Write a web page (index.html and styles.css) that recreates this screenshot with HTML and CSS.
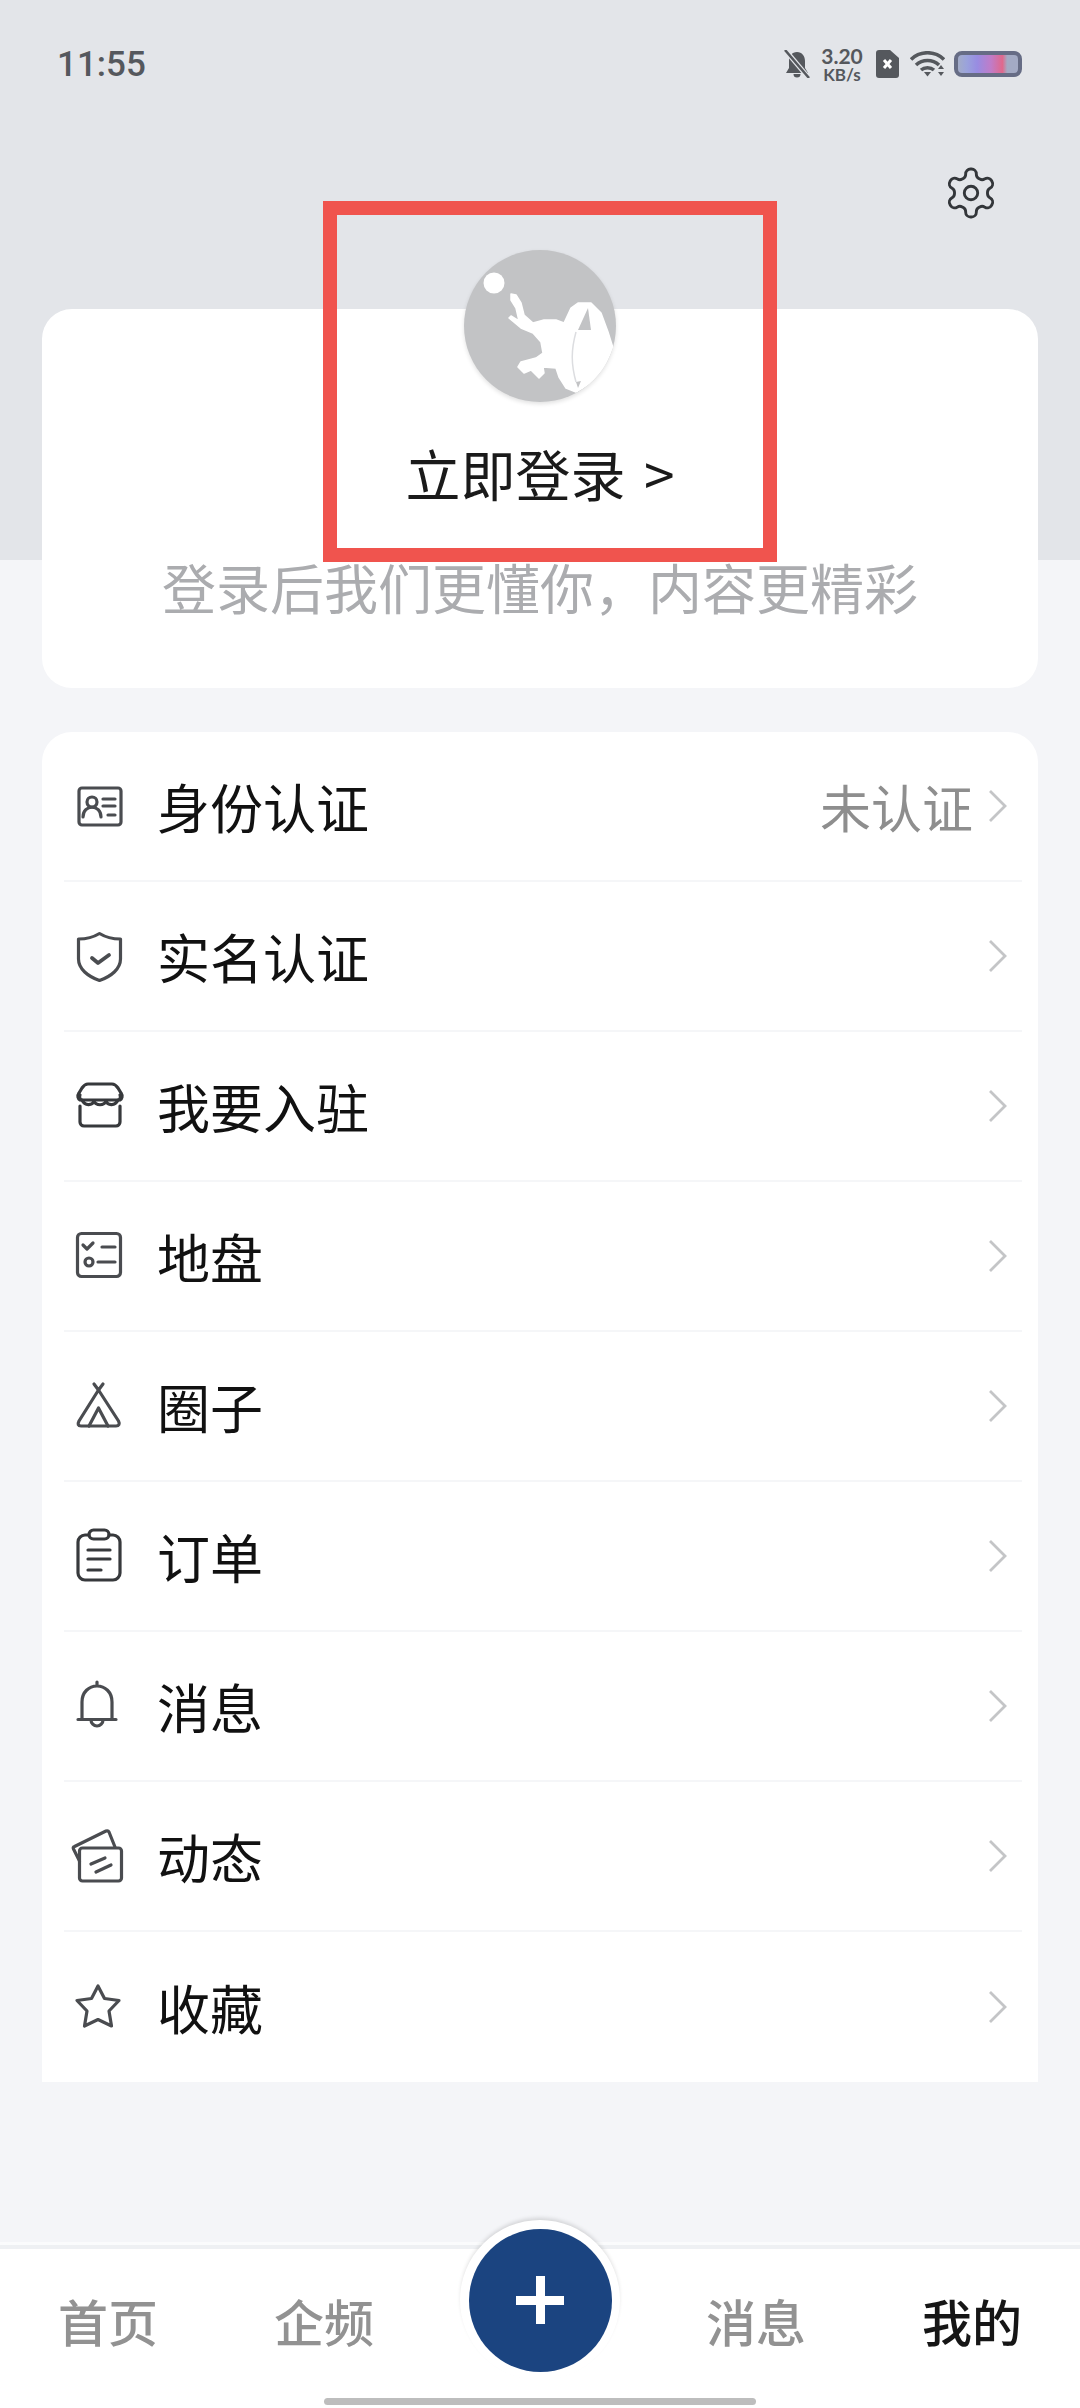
FILE: index.html
```html
<!DOCTYPE html>
<html lang="zh-CN">
<head>
<meta charset="utf-8">
<title>我的</title>
<link rel="stylesheet" href="styles.css">
</head>
<body>
<div class="page">
  <header class="status">
    <span class="time">11:55</span>
    <div class="status-icons">
      <svg class="st-bell" viewBox="0 0 26 28"><path d="M13 2c5 0 8 4 8 9v7l3 5H2l3-5v-7c0-5 3-9 8-9z" fill="#55585d"/><path d="M9.500 24a3.500 3.500 0 0 0 7 0z" fill="#55585d"/><path d="M2 1l22 26" stroke="#e3e5e9" stroke-width="5"/><path d="M1 0l24 28" stroke="#55585d" stroke-width="2.500"/></svg>
      <div class="speed"><span class="speed-num">3.20</span><span class="speed-unit">KB/s</span></div>
      <svg class="st-sim" viewBox="0 0 23 28"><path d="M3 0h11l9 8v17a3 3 0 0 1-3 3H3a3 3 0 0 1-3-3V3a3 3 0 0 1 3-3z" fill="#55585d"/><path d="M8 10l7 8M15 10l-7 8" stroke="#fff" stroke-width="3"/></svg>
      <svg class="st-wifi" viewBox="0 0 35 26"><g fill="none" stroke="#55585d" stroke-width="3.600"><path d="M1 8.500C10-.5 25-.5 34 8.500"/><path d="M6 14c6.500-6 16.500-6 23 0"/><path d="M11 19c3.500-3 9.500-3 13 0"/></g><path d="M14 21h7l-3.500 4.500z" fill="#55585d"/><path d="M31 14l3 4h-6zM31 25l3-4h-6z" fill="#55585d"/></svg>
      <div class="battery"></div>
    </div>
  </header>

  <div class="top-actions">
    <svg class="gear" viewBox="2 2 20 20"><path d="M12.220 2h-.44a2 2 0 0 0-2 2v.18a2 2 0 0 1-1 1.730l-.43.25a2 2 0 0 1-2 0l-.15-.08a2 2 0 0 0-2.730.73l-.22.38a2 2 0 0 0 .73 2.730l.15.1a2 2 0 0 1 1 1.720v.51a2 2 0 0 1-1 1.740l-.15.09a2 2 0 0 0-.73 2.730l.22.38a2 2 0 0 0 2.730.73l.15-.08a2 2 0 0 1 2 0l.43.25a2 2 0 0 1 1 1.730V20a2 2 0 0 0 2 2h.44a2 2 0 0 0 2-2v-.18a2 2 0 0 1 1-1.730l.43-.25a2 2 0 0 1 2 0l.15.08a2 2 0 0 0 2.730-.73l.22-.39a2 2 0 0 0-.73-2.730l-.15-.08a2 2 0 0 1-1-1.740v-.5a2 2 0 0 1 1-1.740l.15-.09a2 2 0 0 0 .73-2.730l-.22-.38a2 2 0 0 0-2.730-.73l-.15.08a2 2 0 0 1-2 0l-.43-.25a2 2 0 0 1-1-1.730V4a2 2 0 0 0-2-2z"/><circle cx="12" cy="12" r="2.800"/></svg>
  </div>

  <section class="profile-card">
    <div class="avatar">
      <svg viewBox="0 0 152 152">
        <circle cx="30" cy="33" r="10.500" fill="#fff"/>
        <path d="M47 44L52 45L57 53L60 65L69 73L80 70L92 70L100 73L107 58L114 53L127 53L137 63L144 82L149 98L140 118L127 133L112 142L102 138L95 127L92 118L79 117L80 123L75 128L67 120L60 123L54 117L57 112L72 108L79 103L77 92L69 83L57 78L45 68L47 66L55 71L52 58L47 50Z" fill="#fff" stroke="#fff" stroke-width="1.500" stroke-linejoin="round"/>
        <path d="M124 58L114 80L127 80Z" fill="#c2c3c5"/>
        <path d="M112 132L117 131L114 138Z" fill="#c2c3c5"/>
        <path d="M112 82c-5 18-5 32 0 50" fill="none" stroke="#dcdde0" stroke-width="1.500"/>
      </svg>
    </div>
    <div class="login">立即登录 &gt;</div>
    <div class="tagline">登录后我们更懂你，内容更精彩</div>
    <div class="annotation"></div>
  </section>

  <section class="menu">
    <div class="row">
      <svg class="ico" viewBox="0 0 48 48"><rect x="3" y="6" width="42" height="37" rx="3"/><circle cx="16" cy="20" r="5"/><path d="M7 35c0-13 18-13 18 0M27 17h12M27 24h12M32 33h7"/></svg>
      <span class="label">身份认证</span>
      <span class="value">未认证</span>
      <svg class="chev" viewBox="0 0 18 32"><path d="M1 1l15 15L1 31"/></svg>
    </div>
    <div class="row">
      <svg class="ico" viewBox="0 0 48 48"><path d="M23.500 1.500C30 5.500 37 7 44.500 7v20c0 10-9.500 17.500-21 21.500C12 44.500 2.500 37 2.500 27V7c7.500 0 14.500-1.500 21-5.500z"/><path class="thick" d="M16 26l6 5 11-8"/></svg>
      <span class="label">实名认证</span>
      <svg class="chev" viewBox="0 0 18 32"><path d="M1 1l15 15L1 31"/></svg>
    </div>
    <div class="row">
      <svg class="ico dark" viewBox="0 0 48 48"><path d="M12 2h24c3 0 4 1 6 4l3 5c2 3 1 6-1 7H4c-2-1-3-4-1-7l3-5c2-3 3-4 6-4z"/><path d="M4 13c-1 2 0 5 2 5 3 6 10 6 12 1 2 5 10 5 12 0 2 5 9 5 12-1 2 0 3-3 2-5"/><path d="M4 24v16a4 4 0 0 0 4 4h32a4 4 0 0 0 4-4V24"/></svg>
      <span class="label">我要入驻</span>
      <svg class="chev" viewBox="0 0 18 32"><path d="M1 1l15 15L1 31"/></svg>
    </div>
    <div class="row">
      <svg class="ico" viewBox="0 0 48 48"><rect x="1.500" y="1.500" width="43" height="43" rx="4"/><path d="M7 13l4 4 6-6M26 15h13M22 30h17"/><circle cx="13" cy="30" r="4"/></svg>
      <span class="label">地盘</span>
      <svg class="chev" viewBox="0 0 18 32"><path d="M1 1l15 15L1 31"/></svg>
    </div>
    <div class="row">
      <svg class="ico" viewBox="0 0 48 48"><path d="M5 44h35c3 0 4-2 2.500-5L22.500 8 3 39c-1.500 3-1 5 2 5z"/><path d="M18 2l4.500 6L27 2M13 44l9.500-18L32 44"/></svg>
      <span class="label">圈子</span>
      <svg class="chev" viewBox="0 0 18 32"><path d="M1 1l15 15L1 31"/></svg>
    </div>
    <div class="row">
      <svg class="ico dark" viewBox="0 0 48 48"><path d="M13 3H9a7 7 0 0 0-7 7v31a7 7 0 0 0 7 7h28a7 7 0 0 0 7-7V10a7 7 0 0 0-7-7h-4"/><rect x="13" y="-2" width="20" height="9" rx="4.500"/><path d="M12 18h22M12 27h22M12 38h13"/></svg>
      <span class="label">订单</span>
      <svg class="chev" viewBox="0 0 18 32"><path d="M1 1l15 15L1 31"/></svg>
    </div>
    <div class="row">
      <svg class="ico" viewBox="0 0 48 48"><path d="M6 37V20C6 10 13 4 21 4s15 6 15 16v17M2 37.500h38M15 38a6 6 0 0 0 12 0M21 0v4"/></svg>
      <span class="label">消息</span>
      <svg class="chev" viewBox="0 0 18 32"><path d="M1 1l15 15L1 31"/></svg>
    </div>
    <div class="row">
      <svg class="ico" viewBox="0 0 48 48"><rect x="3.500" y="16" width="42" height="33" rx="3"/><path d="M3.500 29L-2.500 17c-.5-1-.5-2 1-2.500L30-1c1.500-.5 2.500 0 3 1l6 15"/><path d="M15 32l14-6M20 40l15-7"/></svg>
      <span class="label">动态</span>
      <svg class="chev" viewBox="0 0 18 32"><path d="M1 1l15 15L1 31"/></svg>
    </div>
    <div class="row">
      <svg class="ico" viewBox="0 0 48 48"><path d="M22 3l6.500 12.500L43 17.500l-10 10.500L35.500 43 22 36.500 8.500 43 11 28 1 17.500l14.500-2z"/></svg>
      <span class="label">收藏</span>
      <svg class="chev" viewBox="0 0 18 32"><path d="M1 1l15 15L1 31"/></svg>
    </div>
  </section>

  <nav class="tabbar">
    <span class="tab">首页</span>
    <span class="tab">企频</span>
    <div class="tab-center">
      <div class="fab"><span class="plus"></span></div>
    </div>
    <span class="tab">消息</span>
    <span class="tab active">我的</span>
    <div class="home-bar"></div>
  </nav>
</div>
</body>
</html>
```
FILE: styles.css
```css
* { box-sizing: border-box; }
html, body { margin: 0; padding: 0; }
body { font-family: "Noto Sans CJK SC", "Noto Sans", sans-serif; color: #111; }

.page {
  width: 1080px;
  height: 2408px;
  overflow: hidden;
  display: flex;
  flex-direction: column;
  background: linear-gradient(#e3e5e9 0, #e3e5e9 560px, #f4f5f8 560px);
}

.status {
  height: 100px;
  padding: 28px 58px 0 57px;
  display: flex;
  align-items: center;
  justify-content: space-between;
  flex: none;
}
.time { font: 500 35px/1 Roboto, sans-serif; color: #55585d; }
.status-icons { display: flex; align-items: center; }
.st-bell { width: 26px; height: 28px; }
.speed { width: 44px; margin-left: 10px; display: flex; flex-direction: column; align-items: center; font-family: Lato, sans-serif; font-weight: 700; color: #55585d; }
.speed-num { font-size: 21px; line-height: 21px; }
.speed-unit { font-size: 17px; line-height: 17px; }
.st-sim { width: 23px; height: 28px; margin-left: 12px; }
.st-wifi { width: 35px; height: 26px; margin-left: 11px; }
.battery {
  width: 68px; height: 26px; margin-left: 9px;
  border: 4px solid #666c85; border-radius: 8px;
  background: linear-gradient(90deg, #a3acc8 0, #9aa2dc 15%, #988ce2 32%, #c07cc8 55%, #e0688c 74%, #a3aac4 82%, #a3aac4 100%);
}

.top-actions {
  height: 209px;
  padding: 69px 85px 0 0;
  display: flex;
  justify-content: flex-end;
  align-items: flex-start;
  flex: none;
}
.gear { width: 48px; height: 48px; fill: none; stroke: #33363a; stroke-width: 1.200; overflow: visible; }

.profile-card {
  position: relative;
  flex: none;
  margin: 0 42px;
  height: 379px;
  background: #fff;
  border-radius: 30px;
  display: flex;
  flex-direction: column;
  align-items: center;
}
.avatar {
  width: 152px; height: 152px;
  margin-top: -59px;
  border-radius: 50%;
  overflow: hidden;
  background: #c2c3c5;
  box-shadow: 0 2px 4px rgba(0,0,0,.12);
  flex: none;
}
.avatar svg { display: block; width: 152px; height: 152px; }
.login { margin-top: 35px; font-size: 55px; word-spacing: 6px; line-height: 70px; color: #1a1a1a; }
.tagline { margin-top: 45px; font-size: 54px; line-height: 70px; color: #abacaf; white-space: nowrap; }
.annotation {
  position: absolute;
  left: 281px; top: -108px;
  width: 454px; height: 361px;
  border: 14px solid #f0544e;
}

.menu {
  flex: none;
  margin: 44px 42px 0;
  background: #fff;
  border-radius: 30px 30px 0 0;
  padding: 0 16px 0 22px;
}
.row {
  height: 150px;
  display: flex;
  align-items: center;
  border-bottom: 2px solid #f5f6f8;
}
.row:last-child { border-bottom: 0; }
.ico {
  width: 48px; height: 48px;
  margin-left: 12px;
  flex: none;
  fill: none;
  stroke: #4a4c50;
  stroke-width: 3.200;
  stroke-linecap: round;
  stroke-linejoin: round;
  overflow: visible;
}
.ico.dark { stroke: #37393c; }
.ico .thick { stroke-width: 3.800; }
.label { margin-left: 33px; font-size: 53px; line-height: 70px; color: #111; }
.value { margin-left: auto; font-size: 51px; line-height: 70px; color: #8e8e8e; }
.chev {
  width: 18px; height: 32px;
  margin-left: auto;
  margin-right: 15px;
  flex: none;
  fill: none;
  stroke: #c4c5c7;
  stroke-width: 2.800;
}
.value + .chev { margin-left: 16px; }

.tabbar {
  position: relative;
  margin-top: auto;
  height: 163px;
  flex: none;
  display: grid;
  grid-template-columns: repeat(5, 216px);
  align-items: start;
  background: #fff;
  border-top: 4px solid #eef0f3;
  box-shadow: 0 -3px 0 #fafbfc;
}
.tab {
  text-align: center;
  padding-top: 37px;
  font-size: 50px;
  font-weight: 500;
  line-height: 68px;
  color: #929292;
}
.tab.active { color: #161616; }
.tab-center { display: flex; justify-content: center; }
.fab {
  width: 160px; height: 160px;
  margin-top: -29px;
  border-radius: 50%;
  background: #fff;
  box-shadow: 0 -3px 4px -1px rgba(0,0,0,.14);
  display: flex;
  align-items: center;
  justify-content: center;
  flex: none;
}
.plus {
  width: 143px; height: 143px;
  border-radius: 50%;
  background:
    linear-gradient(#fff, #fff) center / 48px 9px no-repeat,
    linear-gradient(#fff, #fff) center / 9px 48px no-repeat,
    #1b4480;
}
.home-bar {
  position: absolute;
  left: 324px; bottom: 3px;
  width: 432px; height: 7px;
  border-radius: 4px;
  background: #bdbdbd;
}
```
